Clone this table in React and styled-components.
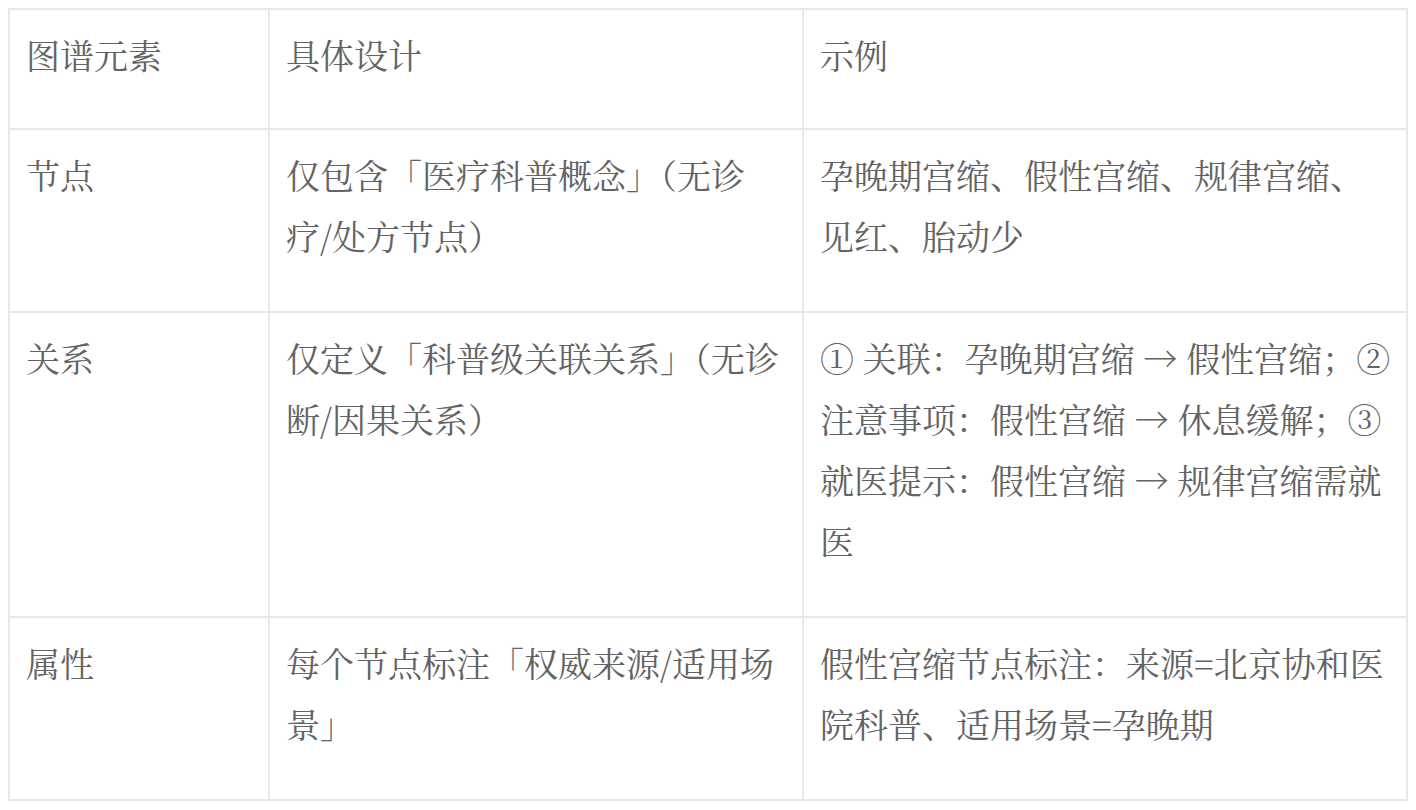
import React from "react";
import styled, { createGlobalStyle } from "styled-components";

const GlobalStyle = createGlobalStyle`
  body {
    margin: 8px;
    background: #ffffff;
    font-family: "Noto Serif CJK SC", "Liberation Serif", "Noto Sans CJK SC", serif;
  }
`;

const Table = styled.table`
  width: 100%;
  border-collapse: collapse;
  table-layout: fixed;
`;

const Col = styled.col`
  width: ${({ w }) => w};
`;

const Cell = styled.td`
  border: 2px solid #e8e8e8;
  padding: 14px ${({ pr }) => pr || 17}px ${({ head }) => (head ? "43px" : "45px")} 16px;
  vertical-align: top;
  color: #636363;
  font-size: 34px;
  line-height: 61px;
  font-weight: normal;
  text-align: left;
`;

const rows = [
  {
    id: 1,
    element: "节点",
    design: "仅包含「医疗科普概念」（无诊疗/处方节点）",
    example: "孕晚期宫缩、假性宫缩、规律宫缩、见红、胎动少",
  },
  {
    id: 2,
    element: "关系",
    design: "仅定义「科普级关联关系」（无诊断/因果关系）",
    example:
      "① 关联：孕晚期宫缩 → 假性宫缩；② 注意事项：假性宫缩 → 休息缓解；③ 就医提示：假性宫缩 → 规律宫缩需就医",
  },
  {
    id: 3,
    element: "属性",
    design: "每个节点标注「权威来源/适用场景」",
    example: "假性宫缩节点标注：来源=北京协和医院科普、适用场景=孕晚期",
  },
];

const App = () => {
  return (
    <>
      <GlobalStyle />
      <Table>
        <colgroup>
          <Col w="18.6%" />
          <Col w="38.2%" />
          <Col w="43.2%" />
        </colgroup>
        <tbody>
          <tr>
            <Cell head>图谱元素</Cell>
            <Cell head>具体设计</Cell>
            <Cell head pr={10}>示例</Cell>
          </tr>
          {rows.map((row) => (
            <tr key={row.id}>
              <Cell>{row.element}</Cell>
              <Cell>{row.design}</Cell>
              <Cell pr={10}>{row.example}</Cell>
            </tr>
          ))}
        </tbody>
      </Table>
    </>
  );
};

export default App;
